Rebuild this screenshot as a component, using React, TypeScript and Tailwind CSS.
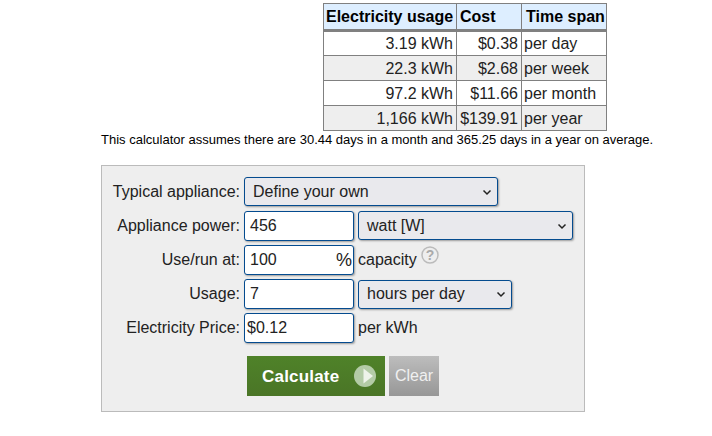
const rows = [
  ["3.19 kWh", "$0.38", "per day"],
  ["22.3 kWh", "$2.68", "per week"],
  ["97.2 kWh", "$11.66", "per month"],
  ["1,166 kWh", "$139.91", "per year"],
];

const fieldClass =
  "shrink-0 rounded-[3px] border border-[#044b8f] shadow-[1px_1px_2px_rgba(0,0,0,0.35)] text-[16px] text-[#222]";

function Select({ width, label, className = "" }: { width: string; label: string; className?: string }) {
  return (
    <div className={`${fieldClass} ${width} h-[29px] flex items-center justify-between bg-[#e9e9ed] pl-[8px] pr-[5px] ${className}`}>
      <span>{label}</span>
      <svg width="10" height="10" viewBox="0 0 10 10" fill="none" stroke="#222" strokeWidth="1.5">
        <path d="M1.5 3.5 L5 7 L8.5 3.5" />
      </svg>
    </div>
  );
}

function Input({ value, className = "" }: { value: string; className?: string }) {
  return (
    <div className={`${fieldClass} w-[110px] h-[30px] flex items-center bg-white ${className}`}>
      {value}
    </div>
  );
}

function Label({ children }: { children: string }) {
  return <div className="w-[142px] shrink-0 text-right text-[16px] text-[#222] pr-[4px]">{children}</div>;
}

export default function App() {
  return (
    <div className="w-[712px] h-[436px] bg-white overflow-hidden font-['Liberation_Sans',Arial,sans-serif] text-[#222]">
      <div className="pt-[3px] pl-[323px]">
        <table className="table-fixed w-[283px] border-collapse text-[16px] leading-[18px] whitespace-nowrap">
          <colgroup>
            <col className="w-[133px]" />
            <col className="w-[65px]" />
            <col className="w-[85px]" />
          </colgroup>
          <thead>
            <tr className="bg-[#ddeeff] font-bold text-black h-[27px]">
              <th className="border border-[#808080] border-b-[3px] px-[2px] text-left">Electricity usage</th>
              <th className="border border-[#808080] border-b-[3px] px-[3px] text-left">Cost</th>
              <th className="border border-[#808080] border-b-[3px] pl-[4px] text-left">Time span</th>
            </tr>
          </thead>
          <tbody>
            {rows.map((r, i) => (
              <tr key={r[0]} className={i % 2 ? "bg-[#eeeeee] h-[25px]" : "bg-white h-[25px]"}>
                <td className="border border-[#808080] px-[3px] pt-[1px] text-right">{r[0]}</td>
                <td className="border border-[#808080] px-[3px] pt-[1px] text-right">{r[1]}</td>
                <td className="border border-[#808080] px-[2px] pt-[1px] text-left">{r[2]}</td>
              </tr>
            ))}
          </tbody>
        </table>
      </div>
      <div className="pl-[101px] text-[13px] leading-[16px] mt-[1px] text-black">
        This calculator assumes there are 30.44 days in a month and 365.25 days in a year on average.
      </div>
      <div className="ml-[101px] mt-[17px] w-[484px] h-[247px] border border-[#bbbbbb] bg-[#eeeeee] pt-[11px]">
        <div className="flex flex-col gap-[4px]">
          <div className="flex items-center h-[30px]">
            <Label>Typical appliance:</Label>
            <Select width="w-[254px]" label="Define your own" className="-mt-[1px]" />
          </div>
          <div className="flex items-center h-[30px]">
            <Label>Appliance power:</Label>
            <Input value="456" className="pl-[5px]" />
            <Select width="w-[215px]" label="watt [W]" className="ml-[4px] -mt-[1px]" />
          </div>
          <div className="flex items-center h-[30px]">
            <Label>Use/run at:</Label>
            <Input value="100" className="pl-[5px]" />
            <span className="-ml-[18px] text-[18px] mr-[2px]">%</span>
            <span className="ml-[4px] text-[16px]">capacity</span>
            <svg className="ml-[4px] -mt-[10px]" width="18" height="18" viewBox="0 0 18 18" fill="none">
              <circle cx="9" cy="9" r="8" stroke="#bbbbbb" strokeWidth="1.5" />
              <text x="9" y="13.5" textAnchor="middle" fontSize="14" fontWeight="bold" fill="#aaaaaa">?</text>
            </svg>
          </div>
          <div className="flex items-center h-[30px]">
            <Label>Usage:</Label>
            <Input value="7" className="pl-[5px]" />
            <Select width="w-[154px]" label="hours per day" className="ml-[4px]" />
          </div>
          <div className="flex items-center h-[30px]">
            <Label>Electricity Price:</Label>
            <Input value="$0.12" className="pl-[2px]" />
            <span className="ml-[4px] text-[16px]">per kWh</span>
          </div>
        </div>
        <div className="flex mt-[13px] ml-[145px] gap-[4px]">
          <div className="w-[138px] h-[40px] flex items-center bg-gradient-to-b from-[#4f8229] to-[#4a7526] pl-[15px] text-white font-bold text-[17px] tracking-[0.2px]">
            <span className="pt-[1px]">Calculate</span>
            <svg className="ml-[15px]" width="22" height="22" viewBox="0 0 22 22">
              <circle cx="11" cy="11" r="11" fill="#b3cba6" />
              <path d="M9.5 3.5 L19 11 L9.5 18.5 Z" fill="#eef3ea" />
            </svg>
          </div>
          <div className="w-[50px] h-[40px] flex items-center justify-center bg-gradient-to-b from-[#bdbdbd] to-[#979797] text-[#f0f0f0] text-[16px]">
            Clear
          </div>
        </div>
      </div>
    </div>
  );
}
